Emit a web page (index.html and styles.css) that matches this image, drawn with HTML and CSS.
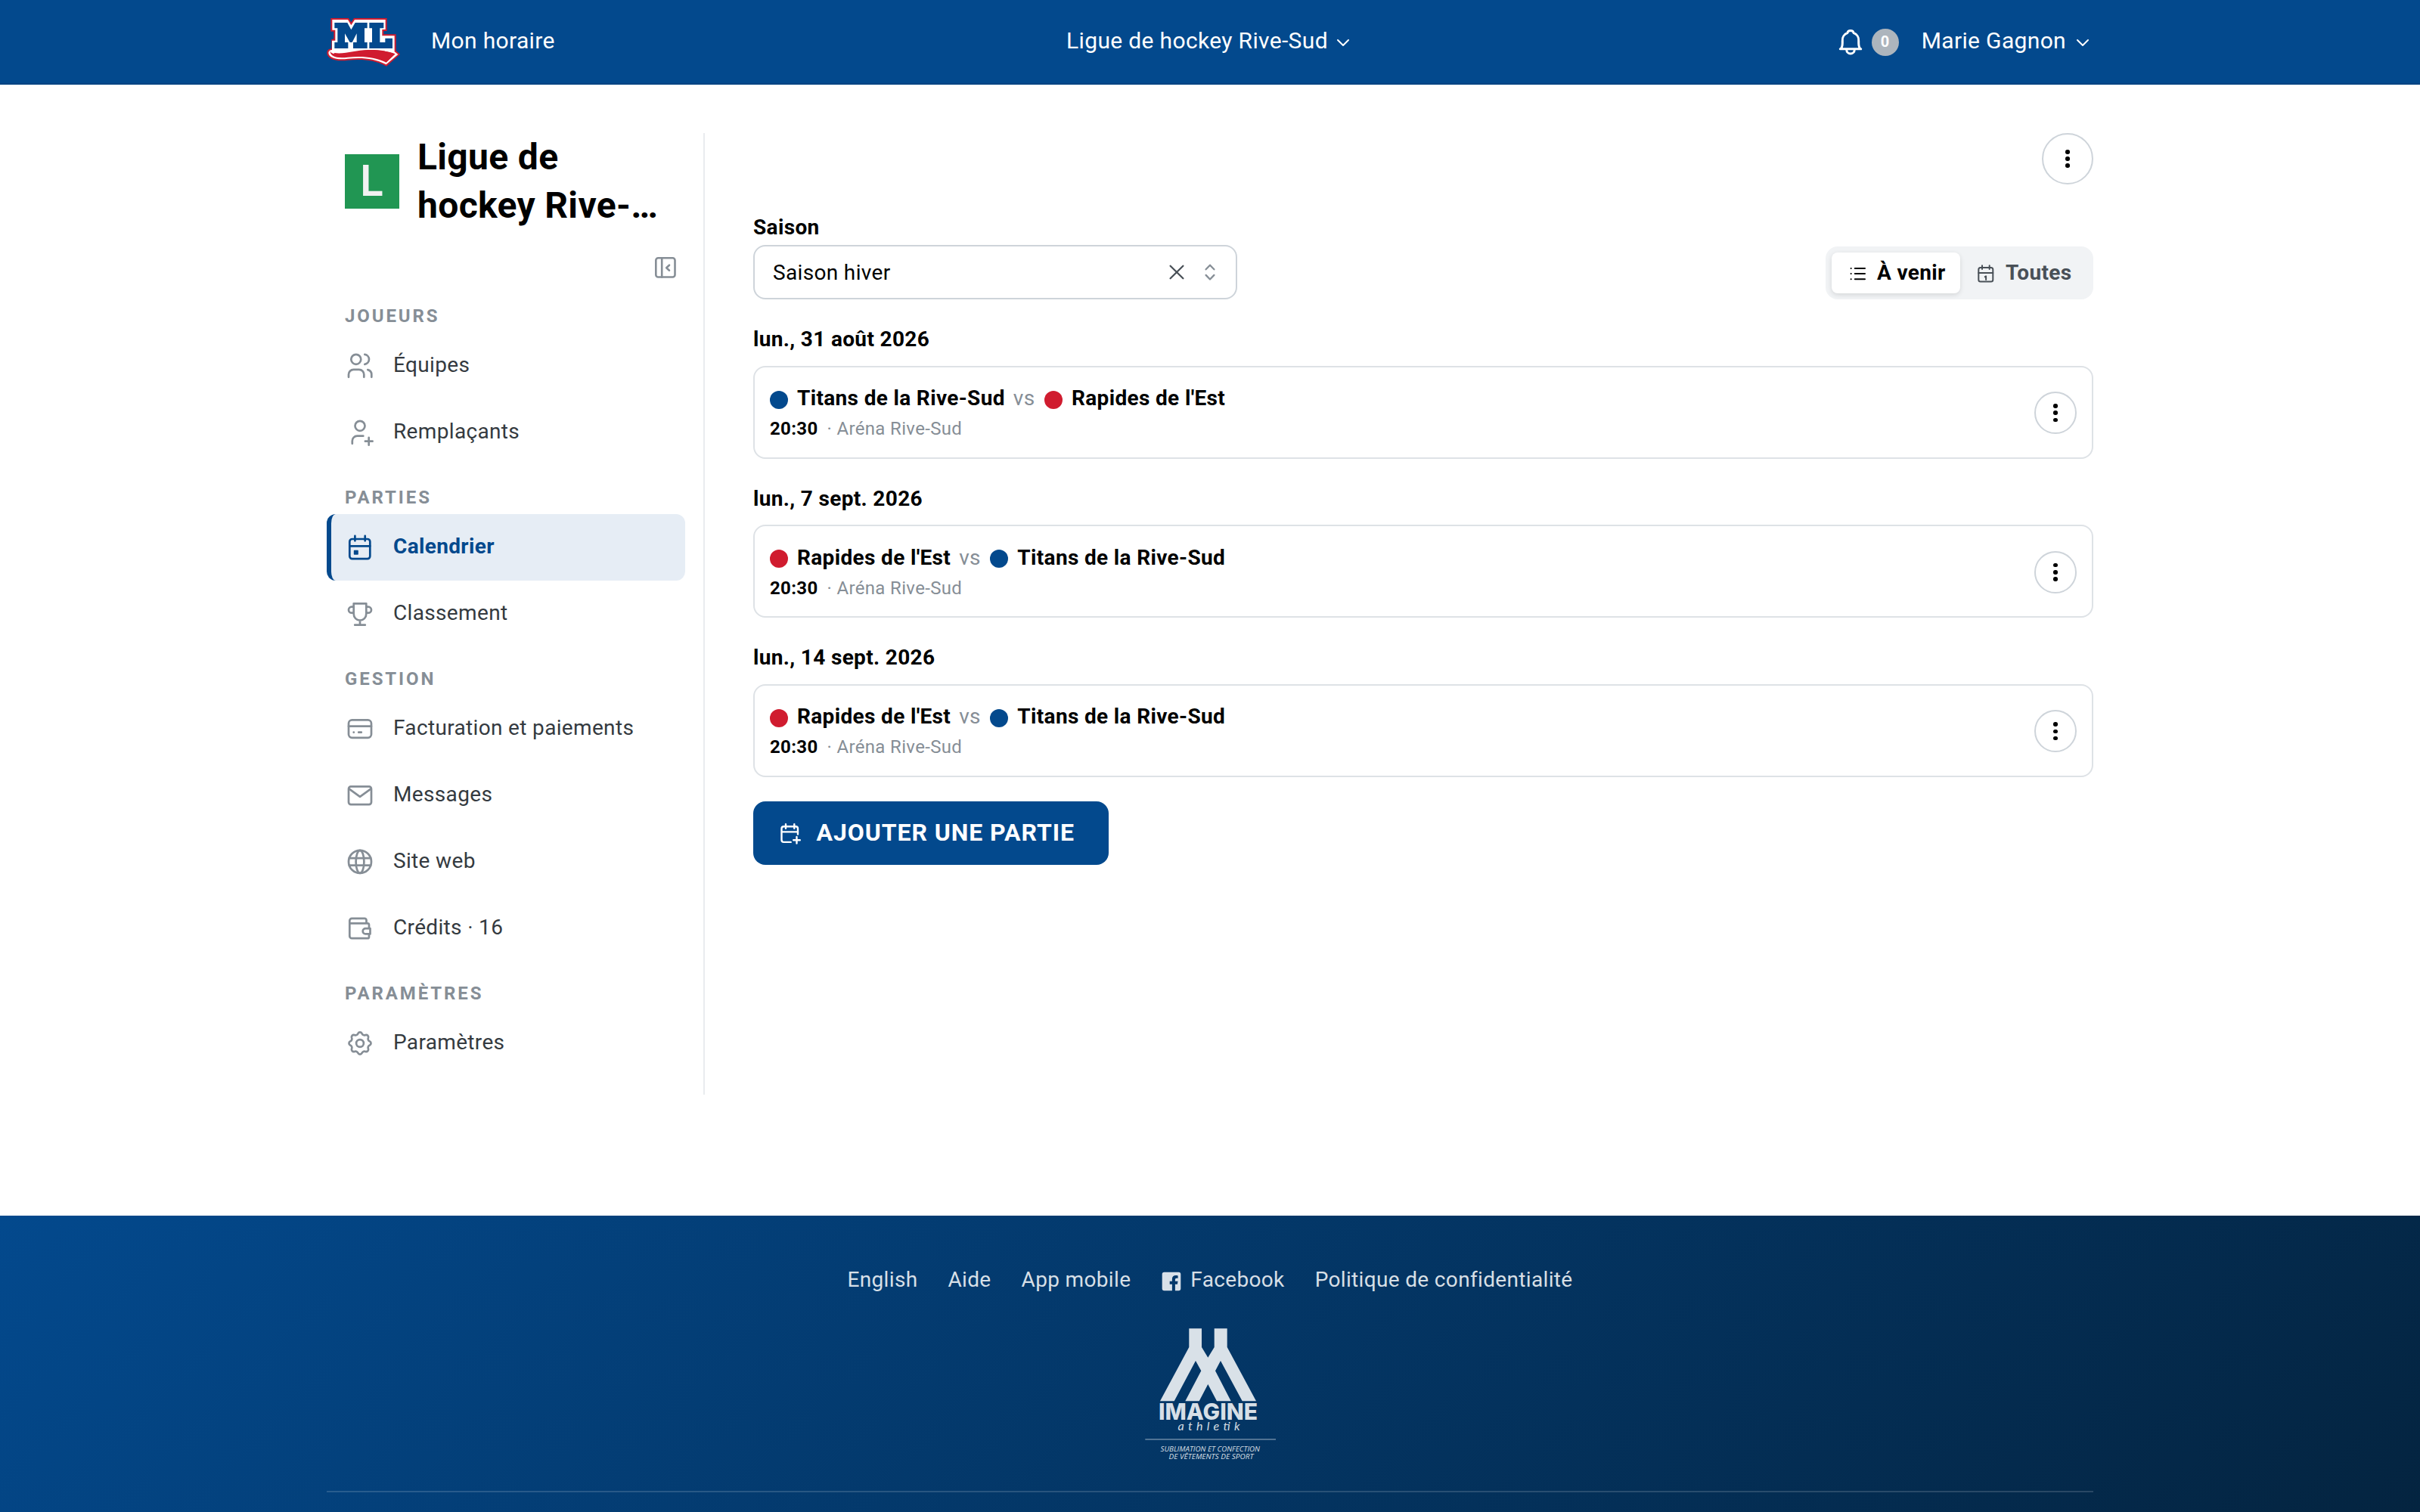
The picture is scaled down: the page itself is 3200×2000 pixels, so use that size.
FILE: index.html
```html
<!DOCTYPE html>
<html lang="fr">
<head>
	<meta charset="UTF-8">
	<title>Calendrier - Ligue de hockey Rive-Sud</title>
	<link rel="stylesheet" href="styles.css">
</head>
<body>
<header class="header">
	<div class="container header_in">
		<div class="header_left">
			<svg class="logo" viewBox="36 72 291 192">
				<path fill="#d01c2f" d="M52 72H123L133 89L144 72H275V123H262V136H311V202L327 215L273 263C225 238 180 234 120 239C70 246 37 232 37 209Q38 194 55 193V155H64V125H52Z"/>
				<path fill="#fff" d="M58 78H120L133 100L147 78H269V117H256V142H305V205L319 216L272 256C225 232 180 228 120 233C75 239 43 228 43 209Q45 198 57 198V161H70V119H58Z"/>
				<path fill="#d01c2f" d="M49 199C48 216 80 218 115 213C160 206 190 195 235 199C262 201 285 205 308 214L272 248C228 226 180 222 120 227C78 232 48 226 49 199Z"/>
				<path fill="#fff" d="M57 199C90 203 120 200 150 194H299V206C240 192 190 196 140 206C100 215 62 218 57 199Z"/>
				<path fill="#d01c2f" d="M66 210C110 216 150 198 200 198C250 198 285 206 306 215L272 246C228 222 170 221 120 225C85 228 60 226 66 210Z"/>
				<path fill="#03498d" d="M67 90H118L133 118L149 90H197V112H186V168H197V192H141V168H155V133L137 168H128L108 133V168H121V192H67V168H79V112H67ZM205 90H262V112H247V168H268V152H297V192H205V168H216V112H205Z"/>
			</svg>
			<a class="header_link">Mon horaire</a>
		</div>
		<div class="header_menu">
			<span class="header_link">Ligue de hockey Rive-Sud</span>
			<svg class="chevron" viewBox="0 0 28 28"><path d="M7 11l7 7 7-7"/></svg>
		</div>
		<div class="header_right">
			<svg class="bell" viewBox="0 0 40 40"><path d="M6.3 28.8c2.2-1 3-3.5 3-7.8v-3a10 10 0 0 1 6.5-10.3c.4-2 2-3.2 4.2-3.2s3.8 1.2 4.2 3.2A10 10 0 0 1 30.7 18v3c0 4.3.8 6.8 3 7.8z"/><path d="M14.8 30a5.2 5 0 0 0 10.4 0"/></svg>
			<span class="count">0</span>
			<div class="header_menu user">
				<span class="header_link">Marie Gagnon</span>
				<svg class="chevron" viewBox="0 0 28 28"><path d="M7 11l7 7 7-7"/></svg>
			</div>
		</div>
	</div>
</header>

<div class="container main">
	<aside class="sidebar">
		<div class="team">
			<span class="team_logo">L</span>
			<h1 class="team_name">Ligue de hockey Rive-Sud</h1>
		</div>
		<div class="collapse">
			<svg viewBox="0 0 28 28"><rect x="1.3" y="1.3" width="25.2" height="25.2" rx="3"/><path d="M9.2 1.5v25M19 10.7L15.2 14.2 19 17.7"/></svg>
		</div>
		<nav>
			<h2 class="nav_title">JOUEURS</h2>
			<ul class="nav">
				<li><svg viewBox="0 0 40 40"><circle cx="14.8" cy="11.3" r="6.5"/><path d="M26.3 4.9a6.5 6.5 0 0 1 0 12.9M5 34.8v-3.5a6.5 6.5 0 0 1 6.5-6.5h7.3a6.5 6.5 0 0 1 6.5 6.5v3.5M30.3 25.1a6.5 6.5 0 0 1 5 6.4v3.3"/></svg><span>Équipes</span></li>
				<li><svg viewBox="0 0 40 40"><circle cx="20" cy="11.3" r="6.5"/><path d="M9.8 34.8v-3.5a6.5 6.5 0 0 1 6.5-6.6h8M31.7 26.9v9.8M26.9 31.7h9.7"/></svg><span>Remplaçants</span></li>
			</ul>
			<h2 class="nav_title">PARTIES</h2>
			<ul class="nav">
				<li class="cur"><svg viewBox="0 0 40 40"><rect x="6.3" y="9" width="27" height="26.2" rx="3.5"/><path d="M6.3 18.3h27M13.4 4.9v6.4M26.7 4.9v6.4"/><rect class="fill" x="12.6" y="24.6" width="4.4" height="4.4"/></svg><span>Calendrier</span></li>
				<li><svg viewBox="0 0 40 40"><path d="M11.7 6.3h16.6v13.8a8.3 8.5 0 0 1-16.6 0zM11.7 10.7H9a4 4 0 0 0 0 8h2.7M28.3 10.7H31a4 4 0 0 1 0 8h-2.7M20 28.8v5.8M13.2 34.7h13.6"/></svg><span>Classement</span></li>
			</ul>
			<h2 class="nav_title">GESTION</h2>
			<ul class="nav">
				<li><svg viewBox="0 0 40 40"><rect x="5" y="8.4" width="30" height="23.4" rx="4.5"/><path d="M5 16.7h30M11.7 24.7h.1M18.2 24.7h3.6"/></svg><span>Facturation et paiements</span></li>
				<li><svg viewBox="0 0 40 40"><rect x="5" y="8.4" width="30" height="23.7" rx="3"/><path d="M5.5 11.4L20 21.8 34.5 11.4"/></svg><span>Messages</span></li>
				<li><svg viewBox="0 0 40 40"><circle cx="20" cy="19.9" r="15"/><ellipse cx="20" cy="19.9" rx="5.4" ry="15"/><path d="M5.8 15.1h28.4M5.8 24.7h28.4"/></svg><span>Site web</span></li>
				<li><svg viewBox="0 0 40 40"><path d="M28.5 13.3V9.2a2.4 2.4 0 0 0-2.4-2.4H9.3a3 3 0 0 0-3 3v20.4a3 3 0 0 0 3 3H30a2 2 0 0 0 2-2v-3.5M6.3 13.3H30a2 2 0 0 1 2 2v4.5"/><path d="M33.5 20.2h-6.2a3.6 3.6 0 0 0 0 7.2h6.2z"/></svg><span>Crédits · 16</span></li>
			</ul>
			<h2 class="nav_title">PARAMÈTRES</h2>
			<ul class="nav">
				<li><svg viewBox="0 0 40 40"><path d="M32.95 17.42A2.9 2.9 0 0 1 32.95 22.58A3.4 3.4 0 0 0 30.98 27.33A2.9 2.9 0 0 1 27.33 30.98A3.4 3.4 0 0 0 22.58 32.95A2.9 2.9 0 0 1 17.42 32.95A3.4 3.4 0 0 0 12.67 30.98A2.9 2.9 0 0 1 9.02 27.33A3.4 3.4 0 0 0 7.05 22.58A2.9 2.9 0 0 1 7.05 17.42A3.4 3.4 0 0 0 9.02 12.67A2.9 2.9 0 0 1 12.67 9.02A3.4 3.4 0 0 0 17.42 7.05A2.9 2.9 0 0 1 22.58 7.05A3.4 3.4 0 0 0 27.33 9.02A2.9 2.9 0 0 1 30.98 12.67A3.4 3.4 0 0 0 32.95 17.42Z"/><circle cx="20" cy="20" r="4.9"/></svg><span>Paramètres</span></li>
			</ul>
		</nav>
	</aside>

	<main class="content">
		<div class="actions">
			<button class="kebab big"><i></i><i></i><i></i></button>
		</div>
		<div class="toolbar">
			<div class="field">
				<label class="label">Saison</label>
				<div class="select">
					<span class="select_val">Saison hiver</span>
					<svg class="clear" viewBox="0 0 28 28"><path d="M5.6 5.7L22.4 22.3M22.4 5.7L5.6 22.3"/></svg>
					<svg class="arrows" viewBox="0 0 32 32"><path d="M10.6 12.3L16 6.7l5.4 5.6M10.6 19.9l5.4 5.6 5.4-5.6"/></svg>
				</div>
			</div>
			<div class="tabs">
				<div class="tab on"><svg viewBox="0 0 28 28"><path d="M5.6 8h.1M5.6 15h.1M5.6 22.2h.1M10.8 8h13.2M10.8 15h13.2M10.8 22.2h13.2"/></svg>À venir</div>
				<div class="tab"><svg viewBox="0 0 28 28"><rect x="4.3" y="7" width="19" height="18.6" rx="2.5"/><path d="M4.3 14h19M9 4.3v4.6M18.7 4.3v4.6M12.8 19.2l1.3-.8v4.6"/></svg>Toutes</div>
			</div>
		</div>

		<h3 class="date">lun., 31 août 2026</h3>
		<div class="game">
			<div>
				<div class="teams"><i class="dot blue"></i><b>Titans de la Rive-Sud</b><span class="vs">vs</span><i class="dot red"></i><b>Rapides de l'Est</b></div>
				<div class="meta"><b>20:30</b><span>· Aréna Rive-Sud</span></div>
			</div>
			<button class="kebab"><i></i><i></i><i></i></button>
		</div>

		<h3 class="date">lun., 7 sept. 2026</h3>
		<div class="game">
			<div>
				<div class="teams"><i class="dot red"></i><b>Rapides de l'Est</b><span class="vs">vs</span><i class="dot blue"></i><b>Titans de la Rive-Sud</b></div>
				<div class="meta"><b>20:30</b><span>· Aréna Rive-Sud</span></div>
			</div>
			<button class="kebab"><i></i><i></i><i></i></button>
		</div>

		<h3 class="date">lun., 14 sept. 2026</h3>
		<div class="game">
			<div>
				<div class="teams"><i class="dot red"></i><b>Rapides de l'Est</b><span class="vs">vs</span><i class="dot blue"></i><b>Titans de la Rive-Sud</b></div>
				<div class="meta"><b>20:30</b><span>· Aréna Rive-Sud</span></div>
			</div>
			<button class="kebab"><i></i><i></i><i></i></button>
		</div>

		<button class="add">
			<svg viewBox="0 0 36 36"><path d="M27 19.5V12a2.8 2.8 0 0 0-2.8-2.8H8.3A2.8 2.8 0 0 0 5.5 12v15.1a2.8 2.8 0 0 0 2.8 2.8h9.4M5.5 16.4H27M11 6.1v5.6M22.3 6.1v5.6M25.5 23v8.6M21.2 27.3h8.6"/></svg>
			<span>AJOUTER UNE PARTIE</span>
		</button>
	</main>
</div>

<footer class="footer">
	<div class="container">
		<div class="links">
			<a>English</a>
			<a>Aide</a>
			<a>App mobile</a>
			<a><svg viewBox="0 0 28 28"><path d="M4.5 1.7h19a2.8 2.8 0 0 1 2.8 2.8v19a2.8 2.8 0 0 1-2.8 2.8h-4.6v-8.5h3l.6-4h-3.6v-2c0-1.3.6-2 2-2h1.7V6.4c-.8-.2-1.7-.3-2.7-.3-3.2 0-5 1.8-5 5v2.7h-3.2v4h3.2v8.5H4.5a2.8 2.8 0 0 1-2.8-2.8v-19a2.8 2.8 0 0 1 2.8-2.8z"/></svg>Facebook</a>
			<a>Politique de confidentialité</a>
		</div>
		<svg class="partner" viewBox="0 0 176 190">
			<path d="M60.3 7.3H77V32L85.3 45.7 93.7 32V7.3H110.7V32L149 103.3H130.7L102 50 95 63.3 115.7 103.3H97L85.3 81 73.7 103.3H55.3L76.3 63.3 69 50 40.7 103.3H22L60.3 32Z"/>
			<text class="p_name" x="20" y="128.3" textLength="131" lengthAdjust="spacingAndGlyphs">IMAGINE</text>
			<text class="p_sub" x="45.5" y="142.3" textLength="82">athletik</text>
			<rect class="p_line" x="2.3" y="153" width="172.7" height="1.8"/>
			<text class="p_small" x="22.5" y="170" textLength="131.5" lengthAdjust="spacingAndGlyphs">SUBLIMATION ET CONFECTION</text>
			<text class="p_small" x="33.5" y="180" textLength="112" lengthAdjust="spacingAndGlyphs">DE VÊTEMENTS DE SPORT</text>
		</svg>
		<div class="footer_end"></div>
	</div>
</footer>
</body>
</html>
```
FILE: styles.css
```css
*{margin:0;padding:0;box-sizing:border-box;}
body{height:2000px;overflow:hidden;background:#fff;color:#000;font:28px/44px Roboto,"Liberation Sans",sans-serif;letter-spacing:.34px;}
ul,li{list-style:none;}
button{font:inherit;letter-spacing:inherit;}
svg{display:block;flex:none;fill:none;stroke:currentColor;stroke-linecap:round;stroke-linejoin:round;}
.container{width:2336px;margin:0 auto;}

/* header */
.header{height:112px;background:#03498d;border-bottom:2px solid #034382;color:#fff;}
.header_in{display:grid;grid-template-columns:1fr auto 1fr;align-items:center;height:112px;font-size:30px;}
.header_left,.header_menu,.header_right{display:flex;align-items:center;}
.header_left{gap:41px;}
.header_menu{gap:6px;}
.header_right{justify-content:flex-end;}
.header_link{padding-bottom:4px;}
.logo{width:97px;height:64px;stroke:none;}
.chevron{width:28px;height:28px;stroke-width:2;}
.bell{width:40px;height:40px;stroke-width:3;}
.count{width:36px;height:36px;margin:0 30px 0 8px;border-radius:50%;background:#adb5bd;font-size:20px;font-weight:700;line-height:34px;text-align:center;}
.user{gap:8px;}

/* sidebar */
.main{display:flex;padding-top:64px;}
.sidebar{width:500px;height:1272px;padding-right:24px;border-right:2px solid #e9ecef;}
.team{display:flex;align-items:center;gap:24px;padding:0 24px;}
.team_logo{flex:none;width:72px;height:72px;background:#219653;color:#f2f2f2;font:600 56px/70px Inter,sans-serif;text-align:center;}
.team_name{display:-webkit-box;-webkit-box-orient:vertical;-webkit-line-clamp:2;overflow:hidden;font-size:48px;font-weight:700;line-height:64px;}
.collapse{display:flex;justify-content:flex-end;height:72px;padding:36px 12px 0 0;color:#868e96;}
.collapse svg{width:28px;height:28px;stroke-width:2.6;}
.nav_title{height:64px;padding:30px 24px 0;color:#868e96;font-size:24px;font-weight:700;line-height:24px;letter-spacing:2.9px;}
.nav li{display:flex;align-items:center;gap:24px;height:88px;padding-left:18px;border-left:6px solid transparent;border-radius:12px;color:#343a40;}
.nav svg{width:40px;height:40px;color:#868e96;stroke-width:2.7;}
.nav span{padding-bottom:3px;}
.nav .cur{background:#e6edf5;border-color:#03498d;color:#03498d;font-weight:700;}
.nav .cur svg{color:#03498d;}
.nav .fill{fill:currentColor;stroke-width:1.6;}

/* content */
.content{flex:1;padding-left:64px;}
.actions{display:flex;justify-content:flex-end;}
.kebab{display:flex;flex-direction:column;align-items:center;justify-content:center;gap:3.7px;flex:none;width:56px;height:56px;border:2px solid #ced4da;border-radius:50%;background:#fff;}
.kebab.big{width:68px;height:68px;}
.kebab i{width:5.6px;height:5.6px;border-radius:50%;background:#000;}
.toolbar{display:flex;align-items:flex-end;justify-content:space-between;margin-top:35px;}
.field{width:640px;}
.label{display:block;margin-bottom:1px;font-weight:700;}
.select{display:flex;align-items:center;height:72px;padding:0 18px 0 24px;border:2px solid #ced4da;border-radius:16px;}
.select_val{flex:1;padding-top:1px;}
.clear{width:28px;height:28px;margin-right:14px;color:#495057;stroke-width:2.3;}
.arrows{width:32px;height:32px;color:#868e96;stroke-width:2.3;}
.tabs{display:flex;height:70px;padding:8px;border-radius:16px;background:#f1f3f5;}
.tab{display:flex;align-items:center;gap:12px;width:168px;height:54px;padding-left:20px;border-radius:8px;color:#495057;font-weight:700;line-height:54px;}
.tab svg{width:28px;height:28px;stroke-width:2;}
.tab.on{width:170px;background:#fff;color:#000;box-shadow:0 2px 6px rgba(0,0,0,.12);}
.date{margin:31px 0 12.8px;font-size:28px;font-weight:700;}
.game{display:flex;align-items:center;justify-content:space-between;height:122.8px;padding:2px 20px 0;border:2px solid #dee2e6;border-radius:16px;}
.teams{display:flex;align-items:center;line-height:40px;}
.dot{width:24px;height:24px;margin:3px 12px 0 0;border-radius:50%;}
.blue{background:#03498d;}
.red{background:#d01c2f;}
.vs{margin:0 12.5px 0 11px;color:#868e96;}
.meta{margin-top:2px;font-size:24px;line-height:36px;}
.meta span{margin-left:12px;color:#868e96;}
.add{display:flex;align-items:center;gap:15.5px;width:470px;height:84px;margin-top:32.2px;padding-left:32px;border:0;border-radius:16px;background:#03498d;color:#fff;font-size:32px;font-weight:700;letter-spacing:.93px;}
.add svg{width:36px;height:36px;stroke-width:2.4;}
.add span{padding-bottom:2px;white-space:nowrap;}

/* footer */
.footer{height:392px;margin-top:160px;padding-top:63px;background:linear-gradient(135deg,#03498d,#042440);color:rgba(255,255,255,.85);}
.links{display:flex;justify-content:center;gap:40px;}
.links a{display:flex;align-items:center;gap:11px;}
.links svg{width:28px;height:28px;margin-top:3px;fill:currentColor;stroke:none;}
.partner{width:176px;height:190px;margin:35px auto 32px;fill:currentColor;stroke:none;}
.partner text{letter-spacing:0;}
.p_name{font:800 29.8px Inter,sans-serif;}
.p_sub{font:italic 400 16px Lato,sans-serif;}
.p_line{opacity:.4;}
.p_small{font:italic 500 8.5px "Open Sans",sans-serif;}
.footer_end{height:2px;background:rgba(255,255,255,.15);}
```
